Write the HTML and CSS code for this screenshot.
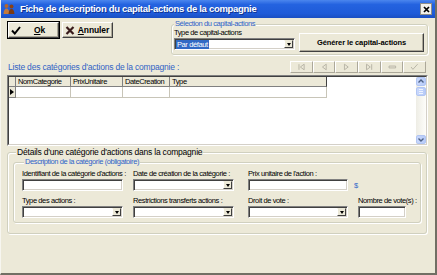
FILE: index.html
```html
<!DOCTYPE html>
<html lang="fr">
<head>
    <meta charset="UTF-8">
    <title>Fiche de description du capital-actions de la compagnie</title>
    <link rel="stylesheet" href="styles.css">
</head>
<body>
    <div class="window">
        <div class="titlebar">
            <svg class="app-icon" viewBox="0 0 12 12">
                <circle cx="3.5" cy="3" r="2" fill="#b5652a"/>
                <circle cx="8.5" cy="3.5" r="2" fill="#8a4216"/>
                <path d="M0.5 11 Q1 5.5 3.5 5.5 Q6 5.5 6.5 11 Z" fill="#c47a3a"/>
                <path d="M5.5 11 Q6 6 8.5 6 Q11 6 11.5 11 Z" fill="#7a3a12"/>
            </svg>
            <span class="title">Fiche de description du capital-actions de la compagnie</span>
            <span class="close-btn">
                <svg viewBox="0 0 9 9"><path d="M2 2 L7 7 M7 2 L2 7" stroke="#000" stroke-width="1.7"/></svg>
            </span>
        </div>

        <div class="client">
            <div class="top-row">
                <button class="btn btn-action btn-default">
                    <svg class="btn-icon" viewBox="0 0 10 9"><path d="M1 4.5 L3.8 7.5 L9 1" fill="none" stroke="#000" stroke-width="2"/></svg>
                    <span class="btn-label"><u>O</u>k</span>
                </button>
                <button class="btn btn-action">
                    <svg class="btn-icon" viewBox="0 0 10 9"><path d="M1.5 1 L8.5 8 M8.5 1 L1.5 8" stroke="#3a1c1c" stroke-width="2.2"/></svg>
                    <span class="btn-label"><u>A</u>nnuler</span>
                </button>

                <fieldset class="group group-select">
                    <legend>Sélection du capital-actions</legend>
                    <div class="group-body">
                        <div class="field field-type">
                            <label>Type de capital-actions</label>
                            <div class="combo"><span class="combo-value"><span class="selected">Par défaut</span></span><span class="drop"></span></div>
                        </div>
                        <button class="btn btn-generate">Générer le capital-actions</button>
                    </div>
                </fieldset>
            </div>

            <div class="list-head">
                <span class="list-title">Liste des catégories d'actions de la compagnie :</span>
                <div class="navigator">
                    <span class="nav-btn"><svg viewBox="0 0 22 10"><path d="M8.5 2 V8 M14 2 L10 5 L14 8 Z" class="glyph"/></svg></span>
                    <span class="nav-btn"><svg viewBox="0 0 22 10"><path d="M13 2 L9 5 L13 8 Z" class="glyph"/></svg></span>
                    <span class="nav-btn"><svg viewBox="0 0 22 10"><path d="M9 2 L13 5 L9 8 Z" class="glyph"/></svg></span>
                    <span class="nav-btn"><svg viewBox="0 0 22 10"><path d="M13.5 2 V8 M8 2 L12 5 L8 8 Z" class="glyph"/></svg></span>
                    <span class="nav-btn"><svg viewBox="0 0 22 10"><path d="M7.5 4 H14.5 V6 H7.5 Z" class="glyph"/></svg></span>
                    <span class="nav-btn"><svg viewBox="0 0 22 10"><path d="M7.5 5 L9.5 7.5 L14.5 2" class="glyph"/></svg></span>
                </div>
            </div>

            <div class="grid">
                <div class="grid-inner">
                    <div class="grid-table">
                        <div class="grid-row grid-header">
                            <span class="indicator"></span>
                            <span class="cell col-nom">NomCategorie</span>
                            <span class="cell col-prix">PrixUnitaire</span>
                            <span class="cell col-date">DateCreation</span>
                            <span class="cell col-type">Type</span>
                        </div>
                        <div class="grid-row grid-data">
                            <span class="indicator"><i class="row-arrow"></i></span>
                            <span class="cell col-nom"></span>
                            <span class="cell col-prix"></span>
                            <span class="cell col-date"></span>
                            <span class="cell col-type"></span>
                        </div>
                    </div>
                    <div class="vscroll">
                        <span class="sb-btn"><svg viewBox="0 0 8 7"><path d="M1.5 4.5 L4 2 L6.5 4.5" fill="none" stroke="#4d6185" stroke-width="1.4"/></svg></span>
                        <span class="sb-thumb"><i></i><i></i><i></i></span>
                        <span class="sb-track"></span>
                        <span class="sb-btn"><svg viewBox="0 0 8 7"><path d="M1.5 2.5 L4 5 L6.5 2.5" fill="none" stroke="#4d6185" stroke-width="1.4"/></svg></span>
                    </div>
                </div>
            </div>

            <fieldset class="group group-details">
                <legend>Détails d'une catégorie d'actions dans la compagnie</legend>
                <fieldset class="group group-desc">
                    <legend>Description de la catégorie (obligatoire)</legend>
                    <div class="form-grid">
                        <div class="field">
                            <label>Identifiant de la catégorie d'actions :</label>
                            <div class="textbox w-wide"></div>
                        </div>
                        <div class="field">
                            <label>Date de création de la catégorie :</label>
                            <div class="combo w-wide"><span class="combo-value"></span><span class="drop"></span></div>
                        </div>
                        <div class="field">
                            <label>Prix unitaire de l'action :</label>
                            <div class="with-unit">
                                <div class="textbox w-mid"></div>
                                <span class="unit">$</span>
                            </div>
                        </div>
                        <div class="field"></div>

                        <div class="field">
                            <label>Type des actions :</label>
                            <div class="combo w-wide"><span class="combo-value"></span><span class="drop"></span></div>
                        </div>
                        <div class="field">
                            <label>Restrictions transferts actions :</label>
                            <div class="combo w-wide"><span class="combo-value"></span><span class="drop"></span></div>
                        </div>
                        <div class="field">
                            <label>Droit de vote :</label>
                            <div class="combo w-mid"><span class="combo-value"></span><span class="drop"></span></div>
                        </div>
                        <div class="field">
                            <label>Nombre de vote(s) :</label>
                            <div class="textbox w-small"></div>
                        </div>
                    </div>
                </fieldset>
            </fieldset>
        </div>
    </div>
</body>
</html>
```

FILE: styles.css
```css
* {
    box-sizing: border-box;
}

body {
    margin: 0;
    background-color: #ece9d8;
    font-family: "Liberation Sans", Arial, sans-serif;
    font-size: 7.5px;
    letter-spacing: -0.4px;
    color: #000;
}

.window {
    width: 437px;
    height: 275px;
    display: flex;
    flex-direction: column;
    background-color: #ece9d8;
    border-left: 1px solid #f7f6f0;
    border-right: 2px solid #716f64;
    border-bottom: 2px solid #716f64;
    overflow: hidden;
}

/* title bar */

.titlebar {
    flex: none;
    height: 18px;
    display: flex;
    align-items: center;
    padding: 0 3px 0 2px;
    background: linear-gradient(to bottom, #4b86ee 0%, #2463e0 25%, #1f5bd8 75%, #1a4fc2 100%);
    color: #fff;
}

.app-icon {
    width: 12px;
    height: 12px;
    margin-right: 5px;
}

.title {
    flex: 1;
    font-weight: bold;
    font-size: 9.5px;
    letter-spacing: -0.3px;
    line-height: 12px;
    text-shadow: 1px 1px 0 #10348f;
    white-space: nowrap;
}

.close-btn {
    width: 12px;
    height: 12px;
    display: flex;
    align-items: center;
    justify-content: center;
    background-color: #f2f1ec;
    border: 1px solid #8f8e88;
}

.close-btn svg {
    width: 9px;
    height: 9px;
}

/* client area */

.client {
    flex: 1;
    display: flex;
    flex-direction: column;
    padding: 2px 7px 0 6px;
}

.top-row {
    display: flex;
    align-items: flex-start;
}

.btn {
    font-family: inherit;
    font-size: 7.5px;
    letter-spacing: -0.1px;
    font-weight: bold;
    color: #000;
    background-color: #ece9d8;
    border: 1px solid;
    border-color: #fff #404040 #404040 #fff;
    box-shadow: inset -1px -1px 0 #aca899;
    padding: 0;
    margin: 0;
}

.btn-action {
    width: 51px;
    height: 16px;
    margin-top: 2px;
    display: flex;
    align-items: center;
    padding-left: 2px;
    font-size: 8.5px;
}

.btn-default {
    margin-left: 1px;
    box-shadow: inset -1px -1px 0 #aca899, 0 0 0 1px #000;
}

.btn-action + .btn-action {
    margin-left: 3px;
}

.btn-icon {
    width: 10px;
    height: 9px;
    flex: none;
}

.btn-label {
    flex: 1;
    text-align: center;
}

/* group boxes */

.group {
    margin: 0;
    padding: 0;
    min-width: 0;
    border: 1px solid #d0d0bf;
    border-radius: 3px;
    box-shadow: inset 1px 1px 0 #fff, 1px 1px 0 #fff;
}

.group > legend {
    margin-left: 2px;
    padding: 0 1px;
    line-height: 8px;
    color: #2e63c9;
    background-color: #ece9d8;
}

.group-select {
    width: 257px;
    margin-left: 58px;
}

.group-body {
    display: flex;
    align-items: flex-end;
    padding: 0 3px 2px 2px;
}

.field label {
    display: block;
    line-height: 9px;
    margin-bottom: 1px;
    white-space: nowrap;
}

.field-type {
    margin-bottom: 2px;
}

.field-type .combo {
    width: 121px;
}

.btn-generate {
    width: 125px;
    height: 19px;
    margin-left: auto;
}

/* inputs */

.textbox,
.combo {
    height: 12px;
    background-color: #fff;
    border: 1px solid;
    border-color: #808080 #fff #fff #808080;
    box-shadow: inset 1px 1px 0 #404040, inset -1px -1px 0 #d4d0c8;
}

.combo {
    display: flex;
    padding: 1px;
}

.combo-value {
    flex: 1;
    line-height: 9px;
}

.selected {
    display: inline-block;
    background-color: #316ac5;
    color: #fff;
    padding: 0 1px;
}

.drop {
    width: 9px;
    display: flex;
    align-items: center;
    justify-content: center;
    background-color: #ece9d8;
    border: 1px solid;
    border-color: #ece9d8 #404040 #404040 #fff;
}

.drop::after {
    content: "";
    border-left: 2.5px solid transparent;
    border-right: 2.5px solid transparent;
    border-top: 3px solid #000;
}

.w-wide {
    width: 101px;
}

.w-mid {
    width: 100px;
}

.w-small {
    width: 48px;
}

/* list header & navigator */

.list-head {
    display: flex;
    align-items: center;
    justify-content: space-between;
    height: 13px;
    margin-top: 5px;
    padding-right: 2px;
}

.list-title {
    font-size: 8.5px;
    letter-spacing: -0.2px;
    color: #3163c5;
    padding-left: 1px;
}

.navigator {
    display: grid;
    grid-template-columns: repeat(6, 1fr);
    width: 136px;
    height: 12px;
}

.nav-btn {
    display: flex;
    background-color: #ece9d8;
    border: 1px solid;
    border-color: #fff #aca899 #aca899 #fff;
}

.nav-btn svg {
    width: 100%;
    height: 100%;
}

.glyph {
    fill: none;
    stroke: #b5b2a4;
    stroke-width: 1;
}

/* data grid */

.grid {
    height: 71px;
    margin-top: 2px;
    border: 1px solid;
    border-color: #808080 #fff #fff #808080;
}

.grid-inner {
    height: 100%;
    display: flex;
    background-color: #fff;
    border: 1px solid;
    border-color: #404040 #d4d0c8 #d4d0c8 #404040;
}

.grid-table {
    flex: 1;
}

.grid-row {
    display: flex;
}

.grid-header {
    height: 10px;
}

.grid-data {
    height: 11px;
}

.indicator {
    width: 7px;
    display: flex;
    align-items: center;
    background-color: #ece9d8;
    border-right: 1px solid #808080;
    border-bottom: 1px solid #808080;
}

.cell {
    line-height: 9px;
    padding-left: 2px;
    white-space: nowrap;
    overflow: hidden;
    border-right: 1px solid #c8c5b8;
    border-bottom: 1px solid #c8c5b8;
}

.grid-header .cell {
    background-color: #ece9d8;
    border-right-color: #808080;
    border-bottom-color: #808080;
}

.grid-header .col-type {
    border-right: 1px solid #404040;
}

.col-nom {
    width: 55px;
}

.col-prix {
    width: 52px;
}

.col-date {
    width: 47px;
}

.col-type {
    width: 157px;
}

.row-arrow {
    margin-left: 1px;
    border-left: 4px solid #000;
    border-top: 3.5px solid transparent;
    border-bottom: 3.5px solid transparent;
}

.vscroll {
    width: 10px;
    display: flex;
    flex-direction: column;
    background: linear-gradient(to right, #eeede5, #fdfdfa);
}

.sb-btn,
.sb-thumb {
    height: 9px;
    display: flex;
    align-items: center;
    justify-content: center;
    background: linear-gradient(to right, #c9d8fc, #b7cbf8);
    border: 1px solid #b1c5f3;
    border-radius: 2px;
}

.sb-btn svg {
    width: 8px;
    height: 7px;
}

.sb-thumb {
    margin-top: 1px;
    flex-direction: column;
    gap: 1px;
}

.sb-thumb i {
    width: 4px;
    height: 1px;
    background-color: #eef3fe;
}

.sb-track {
    flex: 1;
}

/* details */

.group-details {
    margin: 1px 1px 0 0;
    padding: 1px 5px 10px 5px;
}

.group-details > legend {
    margin-left: 3px;
    font-size: 8.5px;
    letter-spacing: -0.2px;
    line-height: 10px;
    color: #000;
}

.group-desc {
    padding: 3px 0 4px 8px;
}

.form-grid {
    display: grid;
    grid-template-columns: 111px 115px 110px 60px;
    row-gap: 5px;
}

.with-unit {
    display: flex;
    align-items: center;
}

.unit {
    margin-left: 6px;
    color: #2e63c9;
}
```
